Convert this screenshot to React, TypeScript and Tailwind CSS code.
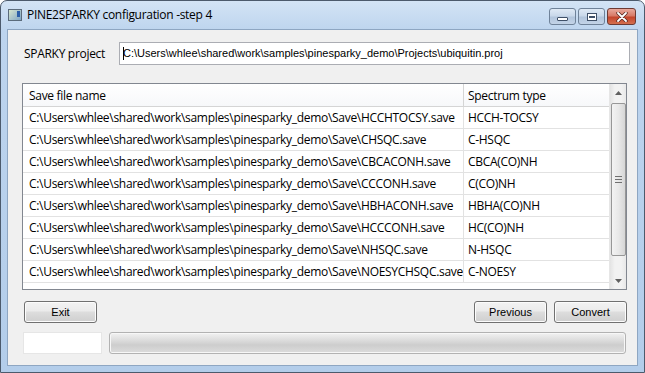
import React from "react";

const prefix = "C:\\Users\\whlee\\shared\\work\\samples\\pinesparky_demo\\Save\\";

const rows = [
  ["HCCHTOCSY.save", "HCCH-TOCSY"],
  ["CHSQC.save", "C-HSQC"],
  ["CBCACONH.save", "CBCA(CO)NH"],
  ["CCCONH.save", "C(CO)NH"],
  ["HBHACONH.save", "HBHA(CO)NH"],
  ["HCCCONH.save", "HC(CO)NH"],
  ["NHSQC.save", "N-HSQC"],
  ["NOESYCHSQC.save", "C-NOESY"],
];

const ui = "font-['Open_Sans',sans-serif] text-[12px] tracking-[-0.3px] text-black whitespace-nowrap";
const ms = "font-['Liberation_Sans',Arial,sans-serif] text-[11px] text-black whitespace-nowrap";

function Button({ label, className }: { label: string; className?: string }) {
  return (
    <div
      className={`h-[22px] w-[73px] rounded-[3px] border border-[#707070] bg-[linear-gradient(#f3f3f3_0%,#ebebeb_45%,#dddddd_50%,#cfcfcf_100%)] shadow-[inset_0_0_0_1px_#fcfcfc] flex items-center justify-center ${ms} ${className ?? ""}`}
    >
      {label}
    </div>
  );
}

function CaptionButton({ kind }: { kind: "min" | "max" | "close" }) {
  if (kind === "close") {
    return (
      <div className="h-[17px] w-[29px] rounded-[3px] border border-[#6d3a33] bg-[linear-gradient(#e9a99c_0%,#d77a67_45%,#c4452c_55%,#d4704f_100%)] flex items-center justify-center">
        <svg width="12" height="10" viewBox="0 0 12 10">
          <path d="M2 1 L10 9 M10 1 L2 9" stroke="#5a2a22" strokeWidth="3.4" strokeLinecap="round" />
          <path d="M2 1 L10 9 M10 1 L2 9" stroke="#ffffff" strokeWidth="1.8" strokeLinecap="round" />
        </svg>
      </div>
    );
  }
  return (
    <div className="h-[17px] w-[27px] rounded-[3px] border border-[#6f8299] bg-[linear-gradient(#dfe9f5_0%,#c9d8ea_45%,#b2c5dc_55%,#c3d4e8_100%)] flex items-center justify-center">
      {kind === "min" ? (
        <div className="mt-[5px] h-[4px] w-[11px] rounded-[1px] border border-[#3f5068] bg-white" />
      ) : (
        <div className="h-[8px] w-[10px] border border-[#3f5068] bg-white flex items-center justify-center">
          <div className="h-[2px] w-[6px] border border-[#3f5068]" />
        </div>
      )}
    </div>
  );
}

export default function App() {
  return (
    <div className="w-[645px] h-[373px] overflow-hidden bg-white">
      <div className="w-[645px] h-[373px] rounded-t-[7px] border border-[#4c5a6c] bg-[linear-gradient(#d3e3f5_0%,#bdd4ee_30px,#b3cdea_100%)] flex flex-col">
        {/* title bar */}
        <div className="h-[28px] flex items-start pl-[7px] pr-[8px]">
          <div className="mt-[8px] h-[12px] w-[14px] border border-[#5b6b7b] bg-[linear-gradient(135deg,#d7e6cf,#7fa6c6)] flex items-start justify-end p-[1px]">
            <div className="h-[6px] w-[3px] bg-[#2b5fa8]" />
          </div>
          <div className={`ml-[5px] mt-[5px] ${ui} text-[12.5px]`}>PINE2SPARKY configuration -step 4</div>
          <div className="ml-auto mt-[7px] flex gap-[2px]">
            <CaptionButton kind="min" />
            <CaptionButton kind="max" />
            <CaptionButton kind="close" />
          </div>
        </div>
        {/* client */}
        <div className="mx-[6px] h-[337px] border border-[#8ea6c2] bg-[#f0f0f0] flex flex-col">
          <div className="mt-[12px] h-[23px] flex items-center">
            <div className={`ml-[16px] w-[95px] ${ui}`}>SPARKY project</div>
            <div className={`h-[23px] w-[511px] border border-[#abadb3] bg-white flex items-center pl-[3px] ${ms}`}>
              <span className="mr-[-1px] h-[13px] w-[1px] bg-black" />
              {"C:\\Users\\whlee\\shared\\work\\samples\\pinesparky_demo\\Projects\\ubiquitin.proj"}
            </div>
          </div>
          {/* list */}
          <div className="mt-[18px] ml-[14px] h-[207px] w-[605px] border border-[#828790] bg-white flex">
            <div className="w-[586px] flex flex-col">
              <div className="h-[23px] flex border-b border-[#d5d5d5] bg-[linear-gradient(#ffffff,#f7f8fa)]">
                <div className={`w-[441px] border-r border-[#d5d5d5] pl-[6px] pt-[1px] flex items-center ${ui}`}>Save file name</div>
                <div className={`flex-1 pl-[4px] pt-[1px] flex items-center ${ui}`}>Spectrum type</div>
              </div>
              {rows.map(([file, type]) => (
                <div key={file} className="h-[22px] flex border-b border-[#e2e2e2]">
                  <div className={`w-[441px] border-r border-[#e2e2e2] pl-[6px] pt-[1px] flex items-center overflow-hidden ${ui}`}>
                    {prefix + file}
                  </div>
                  <div className={`flex-1 pl-[4px] pt-[1px] flex items-center ${ui}`}>{type}</div>
                </div>
              ))}
            </div>
            {/* scrollbar */}
            <div className="w-[17px] border-l border-[#e6e6e6] bg-[linear-gradient(90deg,#e3e3e3,#f2f2f2_30%,#f2f2f2_70%,#e8e8e8)] flex flex-col items-center">
              <div className="h-[18px] flex items-center justify-center">
                <svg width="7" height="4" viewBox="0 0 7 4">
                  <path d="M0 4 L3.5 0 L7 4 Z" fill="#606060" />
                </svg>
              </div>
              <div className="mt-[1px] h-[153px] w-[15px] rounded-[2px] border border-[#979797] bg-[linear-gradient(90deg,#f3f3f3,#e8e8e8_50%,#d6d6d6)] flex flex-col items-center justify-center gap-[2px]">
                <div className="h-[1px] w-[7px] bg-[#707070]" />
                <div className="h-[1px] w-[7px] bg-[#707070]" />
                <div className="h-[1px] w-[7px] bg-[#707070]" />
              </div>
              <div className="mt-auto h-[17px] flex items-center justify-center">
                <svg width="7" height="4" viewBox="0 0 7 4">
                  <path d="M0 0 L7 0 L3.5 4 Z" fill="#606060" />
                </svg>
              </div>
            </div>
          </div>
          {/* buttons */}
          <div className="mt-[11px] flex">
            <Button label="Exit" className="ml-[16px]" />
            <Button label="Previous" className="ml-auto" />
            <Button label="Convert" className="ml-[7px] mr-[10px]" />
          </div>
          {/* status */}
          <div className="mt-[9px] flex">
            <div className="ml-[15px] h-[22px] w-[79px] border border-[#e6e6e6] bg-white" />
            <div className="ml-[7px] h-[22px] w-[517px] rounded-[3px] border border-[#b2b2b2] bg-[linear-gradient(#f2f2f2_0%,#dadada_40%,#cdcdcd_60%,#dcdcdc_100%)] shadow-[inset_0_0_0_1px_#f7f7f7]" />
          </div>
        </div>
      </div>
    </div>
  );
}
